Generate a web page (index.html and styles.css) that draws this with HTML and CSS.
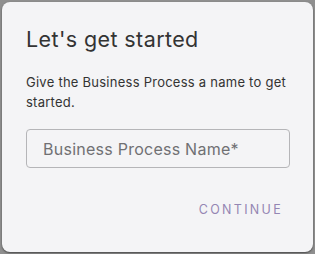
FILE: index.html
```html
<!DOCTYPE html>
<html lang="en">
<head>
    <meta charset="UTF-8">
    <meta name="viewport" content="width=device-width, initial-scale=1.0">
    <title>Let's get started</title>
    <link rel="stylesheet" href="styles.css">
</head>
<body>

    <div class="backdrop">
        <div class="dialog">
            <h2 class="title">Let's get started</h2>
            <p class="desc">Give the Business Process a name to get started.</p>

            <div class="field">
                <input type="text" class="field_input" placeholder="Business Process Name*">
            </div>

            <div class="actions">
                <button type="button" class="btn_continue">Continue</button>
            </div>
        </div>
    </div>

</body>
</html>
```

FILE: styles.css
```css
*{margin:0;padding:0;box-sizing:border-box;}
html,body{width:100%;height:100%;}
body{background-color:#8f8f8f;font-family:"Inter","Liberation Sans",sans-serif;}

.backdrop{width:315px;height:254px;padding:2px;}

.dialog{width:311px;height:250px;background-color:#f4f4f6;border-radius:8px;padding:24px 22px 0 24px;box-shadow:0 1px 2px rgba(0,0,0,0.5);}

.title{font-size:21.5px;font-weight:400;color:#333;line-height:26px;letter-spacing:0.4px;}

.desc{margin-top:20px;font-size:13px;line-height:20px;color:#333;width:272px;letter-spacing:0.25px;}

.field{margin-top:17px;width:264px;}
.field_input{width:100%;height:39px;border:1px solid #b5b5b8;border-radius:4px;background:transparent;padding:0 16px;font-family:inherit;font-size:16px;letter-spacing:0.25px;color:#333;outline:none;}
.field_input::placeholder{color:#707073;}

.actions{display:flex;justify-content:flex-end;margin-top:34px;width:264px;}
.btn_continue{border:0;background:none;font-family:inherit;font-size:12.5px;line-height:16px;text-transform:uppercase;letter-spacing:2.3px;color:#9486b3;padding:0 7px 0 0;cursor:pointer;}
```
